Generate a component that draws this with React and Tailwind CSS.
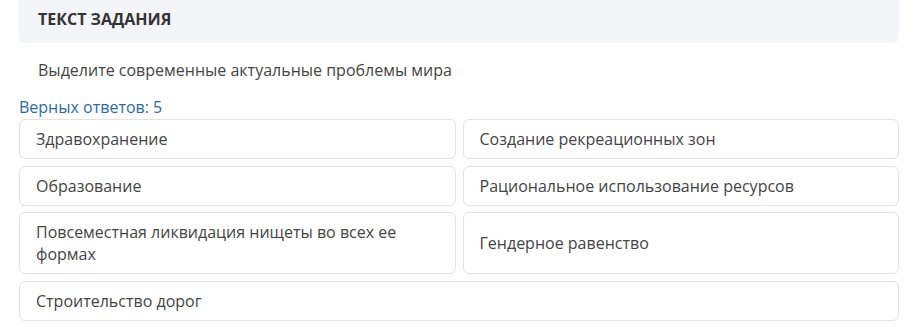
import React from "react";

const answers = [
  "Здравохранение",
  "Создание рекреационных зон",
  "Образование",
  "Рациональное использование ресурсов",
  "Повсеместная ликвидация нищеты во всех ее формах",
  "Гендерное равенство",
];

const AnswerCard = ({ text, wide }) => (
  <div
    className={`flex items-center rounded-md border border-[#e3e3e3] bg-white px-4 py-[8px] text-[16px] leading-[22px] text-[#444] ${
      wide ? "col-span-2" : ""
    }`}
  >
    <span className={wide ? "" : "max-w-[380px]"}>{text}</span>
  </div>
);

export default function App() {
  return (
    <div
      className="w-[912px] h-[333px] bg-white pl-[19px] pr-[13px]"
      style={{ fontFamily: '"Open Sans", "Liberation Sans", sans-serif' }}
    >
      <div className="h-[43px] rounded-b-md bg-[#f4f5f8] pl-[19px] flex items-center">
        <h2 className="text-[16px] font-bold text-[#333] -mt-[6px]">ТЕКСТ ЗАДАНИЯ</h2>
      </div>
      <p className="mt-[15px] pl-[19px] text-[16px] leading-[24px] text-[#444]">
        Выделите современные актуальные проблемы мира
      </p>
      <div className="mt-[14px] text-[16px] leading-[22px] text-[#2d6b9c]">Верных ответов: 5</div>
      <div className="mt-[1px] grid grid-cols-2 gap-x-[7px] gap-y-[6.5px]">
        {answers.map((a) => (
          <AnswerCard key={a} text={a} />
        ))}
        <AnswerCard text="Строительство дорог" wide />
      </div>
    </div>
  );
}
